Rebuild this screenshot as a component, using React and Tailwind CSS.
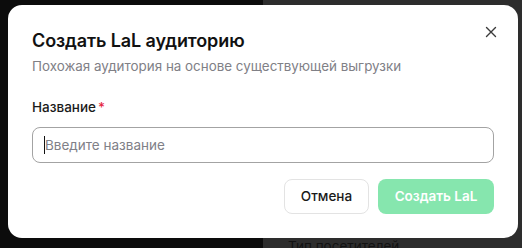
import React from "react";

function CloseIcon() {
  return (
    <svg width="12" height="12" viewBox="0 0 12 12" fill="none" stroke="#3a3a3a" strokeWidth="1.4" strokeLinecap="round">
      <path d="M1.5 1.5l9 9M10.5 1.5l-9 9" />
    </svg>
  );
}

function CreateLalDialog() {
  return (
    <div className="absolute left-[8px] top-[5px] w-[510px] h-[233px] rounded-[14px] bg-white px-6 pt-6 pb-6 flex flex-col">
      <button className="absolute right-[19px] top-[19px] w-4 h-4 flex items-center justify-center">
        <CloseIcon />
      </button>
      <h2 className="text-[18px] leading-6 font-semibold text-[#111111] tracking-[-0.1px]">
        Создать LaL аудиторию
      </h2>
      <p className="mt-[3px] text-[13.4px] leading-5 text-[#808086]">
        Похожая аудитория на основе существующей выгрузки
      </p>
      <label className="mt-[21px] text-[13.5px] leading-5 font-medium text-[#1a1a1a]">
        Название<span className="text-[#e5253f] ml-[2px]">*</span>
      </label>
      <div className="mt-[10px] h-[36px] rounded-lg border border-[#a3a3a3] flex items-center px-3">
        <span className="w-px h-[18px] bg-[#111] -ml-[1px]" />
        <span className="text-[13.5px] text-[#808087]">Введите название</span>
      </div>
      <div className="mt-4 flex justify-end gap-[9px]">
        <button className="h-[35px] w-[85px] rounded-lg border border-[#e3e3e3] bg-white text-[13.5px] font-medium text-[#1a1a1a]">
          Отмена
        </button>
        <button className="h-[35px] w-[116px] rounded-lg bg-[#86e6ae] text-[13.5px] font-semibold text-white">
          Создать LaL
        </button>
      </div>
    </div>
  );
}

export default function App() {
  return (
    <div
      className="relative w-[522px] h-[248px] overflow-hidden bg-[#0c0c0c]"
      style={{ fontFamily: "Inter, 'Noto Sans', sans-serif" }}
    >
      <div className="flex h-full">
        <div className="w-[263px] h-full bg-[#0c0c0c]" />
        <div className="flex-1 h-full bg-[#2d2d2d] flex flex-col justify-end pl-[25px]">
          <div className="text-[13.5px] leading-5 text-[#121212] -mb-[8px]">Тип посетителей</div>
        </div>
      </div>
      <CreateLalDialog />
    </div>
  );
}
